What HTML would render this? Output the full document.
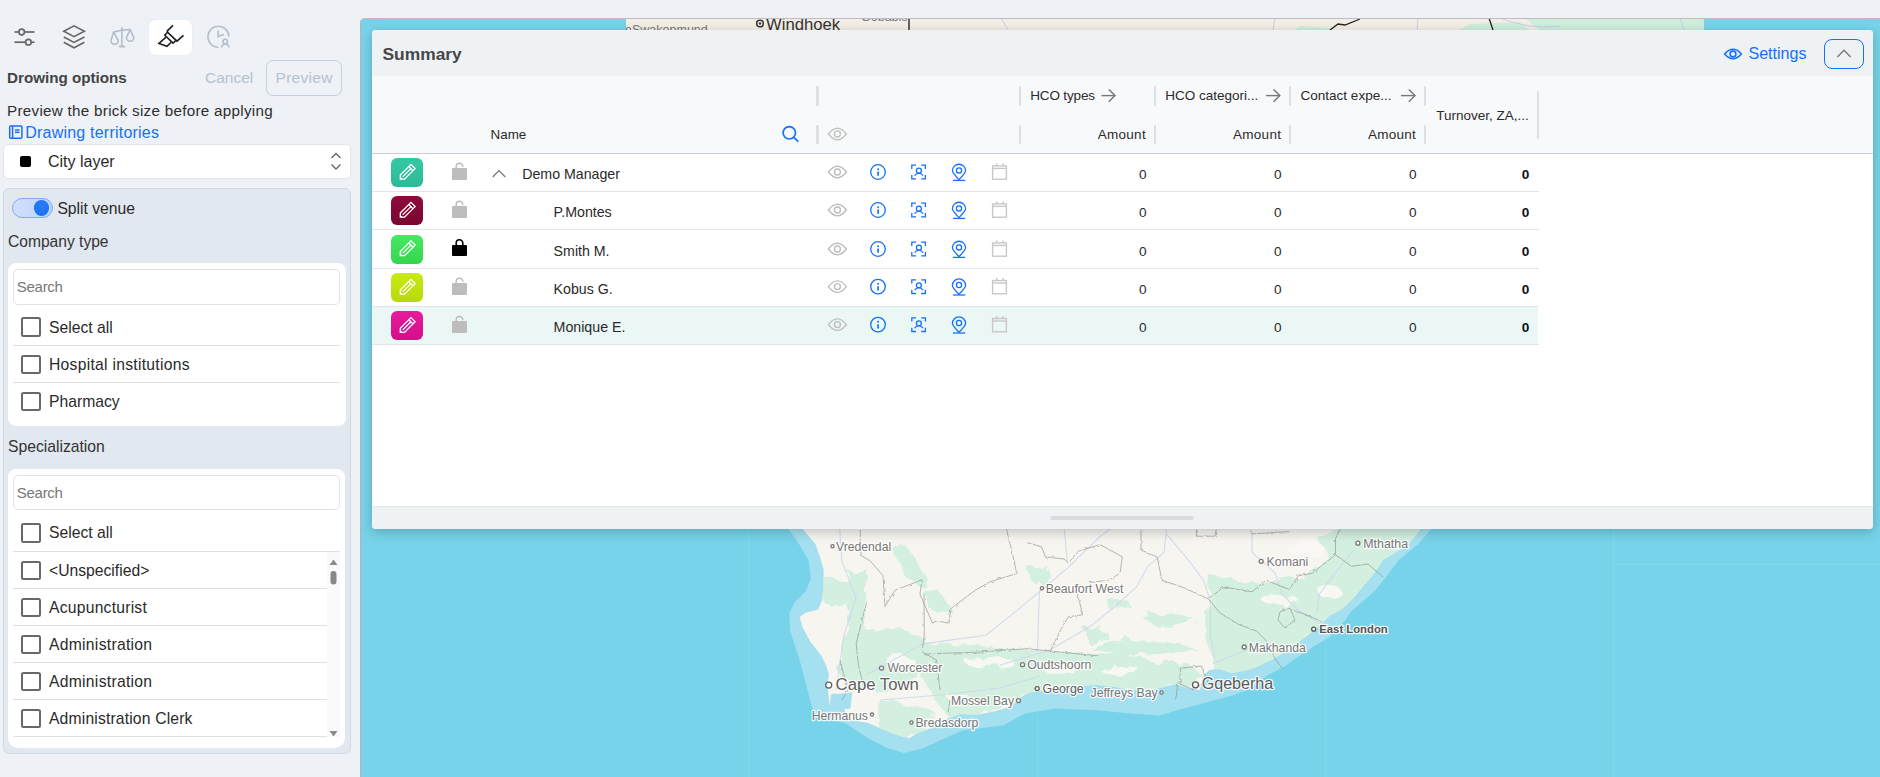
<!DOCTYPE html>
<html><head><meta charset="utf-8">
<style>
*{box-sizing:border-box;margin:0;padding:0}
html,body{width:1880px;height:777px;overflow:hidden;background:#eef1f5;font-family:"Liberation Sans",sans-serif;color:#2a2a2a}
.a{position:absolute}
.t{position:absolute;white-space:nowrap;line-height:1}
svg{position:absolute;overflow:visible}
.cb{position:absolute;left:21.3px;width:19.6px;height:19.6px;border:2px solid #686868;border-radius:2.5px;background:#fff}
.sep{position:absolute;height:1px;background:#e0e0e0}
.lt{font-size:15.7px;left:49px;color:#2a2a2a}
.rl{position:absolute;left:372px;width:1167px;height:1px;background:#e1e4e8}
.ic{position:absolute}
</style></head><body>

<!-- ============ LEFT SIDEBAR ============ -->
<div id="side">
  <!-- top icons -->
  <div class="a" style="left:149px;top:20px;width:43px;height:35px;background:#fff;border-radius:7px;box-shadow:0 0 2px rgba(0,0,0,0.05)"></div>
  <!-- sliders -->
  <svg style="left:0;top:0" width="1" height="1">
    <g stroke="#666" stroke-width="1.7" fill="none">
      <line x1="14.5" y1="32" x2="19" y2="32"/><line x1="24.5" y1="32" x2="34.5" y2="32"/>
      <circle cx="21.7" cy="32" r="2.8" fill="#eef1f5"/>
      <line x1="14.5" y1="42.2" x2="25.5" y2="42.2"/><line x1="31.3" y1="42.2" x2="34.5" y2="42.2"/>
      <circle cx="28.4" cy="42.2" r="2.8" fill="#eef1f5"/>
    </g>
    <!-- layers -->
    <g stroke="#666" stroke-width="1.6" fill="none" stroke-linejoin="miter">
      <path d="M63.8 31.2 L74 25.8 L84.4 31.2 L74 36.6 Z"/>
      <path d="M63.8 37 L74 42.4 L84.4 37"/>
      <path d="M63.8 42.2 L74 47.8 L84.4 42.2"/>
    </g>
    <!-- scales -->
    <g stroke="#b0bccb" stroke-width="1.5" fill="none" stroke-linejoin="round">
      <line x1="121.9" y1="27.2" x2="121.9" y2="46.5"/>
      <line x1="119" y1="46.5" x2="125" y2="46.5" stroke-width="1.8"/>
      <path d="M113.6 32 Q121 29.6 130.2 29.4"/>
      <path d="M113.6 32 L110.9 40.6 A3.7 3.7 0 0 0 118.3 40.6 Z"/>
      <path d="M130.2 29.6 L126.4 37.6 A3.7 3.7 0 0 0 133.8 37.6 Z"/>
    </g>
    <!-- brush -->
    <g stroke="#1e1e1e" stroke-width="1.6" fill="none" stroke-linejoin="miter" stroke-linecap="butt">
      <path d="M173 25.3 L167.3 30.8 L167.5 32.2"/>
      <path d="M167.5 32.2 L164.8 35.3 L173 43.2 L176.1 40.3 Z"/>
      <path d="M183.5 35.3 L177 41.1 L176.1 40.3"/>
      <path d="M165.8 37.3 L158.9 43.5 L167 46.3 L171.2 42.2"/>
    </g>
    <!-- clock user -->
    <g stroke="#b3bfcd" stroke-width="1.6" fill="none">
      <path d="M228.9 36.8 A10.5 10.5 0 1 0 218.4 47.3"/>
      <path d="M218.2 30.6 V36.6 L224 34.3"/>
      <circle cx="225.2" cy="41.6" r="2.3"/>
      <path d="M221.6 47.6 A3.7 3.7 0 0 1 229 47.6"/>
    </g>
  </svg>

  <div class="t" style="left:7px;top:70px;font-size:15.2px;font-weight:bold;color:#444">Drowing options</div>
  <div class="t" style="left:205px;top:70px;font-size:15.5px;color:#b5c2d0">Cancel</div>
  <div class="a" style="left:266px;top:60px;width:76px;height:36px;border:1.3px solid #c5d0dc;border-radius:7px"></div>
  <div class="t" style="left:275.5px;top:70px;font-size:15.5px;letter-spacing:0.3px;color:#b5c2d0">Preview</div>

  <div class="t" style="left:7px;top:103px;font-size:15.2px;letter-spacing:0.29px;color:#2e2e2e">Preview the brick size before applying</div>
  <svg style="left:0;top:0" width="1" height="1">
    <g stroke="#1a6cf5" stroke-width="1.5" fill="none">
      <rect x="9.7" y="126" width="12.2" height="12.2" rx="1"/>
      <line x1="12.6" y1="126" x2="12.6" y2="138.2"/>
      <line x1="15" y1="130" x2="19.5" y2="130"/>
      <line x1="15" y1="132.3" x2="19.5" y2="132.3"/>
    </g>
  </svg>
  <div class="t" style="left:25.2px;top:124.9px;font-size:16px;letter-spacing:0.22px;color:#1570fb">Drawing territories</div>

  <!-- select -->
  <div class="a" style="left:3px;top:143.5px;width:348px;height:35.5px;background:#fff;border:1px solid #e0e5ea;border-radius:5px"></div>
  <div class="a" style="left:20px;top:156px;width:11px;height:11px;background:#000;border-radius:2px"></div>
  <div class="t" style="left:48px;top:153.7px;font-size:16px;color:#2a2a2a">City layer</div>
  <svg style="left:0;top:0" width="1" height="1">
    <g stroke="#666" stroke-width="1.4" fill="none">
      <path d="M331.5 158 L336 153.5 L340.5 158"/>
      <path d="M331.5 164.5 L336 169 L340.5 164.5"/>
    </g>
  </svg>

  <!-- group box -->
  <div class="a" style="left:2.5px;top:188px;width:348.5px;height:565.8px;background:#e2e8ef;border:1px solid #d0d8e2;border-radius:6px"></div>
  <!-- toggle -->
  <div class="a" style="left:12px;top:198px;width:41px;height:19.6px;border-radius:10px;background:linear-gradient(90deg,#d3e0fc,#bcd2fb);border:1.4px solid #7eaaf8"></div>
  <div class="a" style="left:33.6px;top:200.2px;width:15.4px;height:15.4px;border-radius:50%;background:radial-gradient(circle at 50% 40%,#2a7cf8,#166bf3)"></div>
  <div class="t" style="left:57.4px;top:200.5px;font-size:15.7px;color:#2a2a2a">Split venue</div>
  <div class="t" style="left:8px;top:233.7px;font-size:15.6px;color:#333">Company type</div>

  <!-- company card -->
  <div class="a" style="left:8px;top:263px;width:337.5px;height:163px;background:#fff;border-radius:8px"></div>
  <div class="a" style="left:13px;top:269px;width:327px;height:36px;border:1px solid #dde2e8;border-radius:5px;background:#fff"></div>
  <div class="t" style="left:16.7px;top:278.8px;font-size:15px;letter-spacing:-0.25px;color:#777">Search</div>
  <div class="cb" style="top:317px"></div>
  <div class="t lt" style="top:320px">Select all</div>
  <div class="sep" style="left:13px;top:345px;width:327px"></div>
  <div class="cb" style="top:354.5px"></div>
  <div class="t lt" style="top:357px;letter-spacing:0.27px">Hospital institutions</div>
  <div class="sep" style="left:13px;top:382px;width:327px"></div>
  <div class="cb" style="top:391.5px"></div>
  <div class="t lt" style="top:394px">Pharmacy</div>

  <div class="t" style="left:8px;top:438.7px;font-size:15.7px;color:#333">Specialization</div>

  <!-- specialization card -->
  <div class="a" style="left:8px;top:469px;width:337px;height:279px;background:#fff;border-radius:8px 8px 10px 10px"></div>
  <div class="a" style="left:13px;top:474.5px;width:327px;height:35.5px;border:1px solid #dde2e8;border-radius:5px;background:#fff"></div>
  <div class="t" style="left:16.7px;top:485.2px;font-size:15px;letter-spacing:-0.25px;color:#777">Search</div>
  <div class="cb" style="top:523px"></div>
  <div class="t lt" style="top:525.4px">Select all</div>
  <div class="sep" style="left:13px;top:551px;width:327px"></div>
  <div class="a" style="left:327px;top:552px;width:13px;height:185px;background:#fafafa"></div>
  <div class="cb" style="top:560.5px"></div>
  <div class="t lt" style="top:563.4px">&lt;Unspecified&gt;</div>
  <div class="sep" style="left:13px;top:588px;width:314px"></div>
  <div class="cb" style="top:597.5px"></div>
  <div class="t lt" style="top:600.4px;letter-spacing:0.23px">Acupuncturist</div>
  <div class="sep" style="left:13px;top:625px;width:314px"></div>
  <div class="cb" style="top:634.5px"></div>
  <div class="t lt" style="top:637.2px;letter-spacing:0.28px">Administration</div>
  <div class="sep" style="left:13px;top:662px;width:314px"></div>
  <div class="cb" style="top:671.5px"></div>
  <div class="t lt" style="top:674.2px;letter-spacing:0.28px">Administration</div>
  <div class="sep" style="left:13px;top:699px;width:314px"></div>
  <div class="cb" style="top:708.5px"></div>
  <div class="t lt" style="top:711px;letter-spacing:0.16px">Administration Clerk</div>
  <div class="sep" style="left:13px;top:736px;width:314px"></div>
  <svg style="left:0;top:0" width="1" height="1">
    <path d="M329.5 565 L333.5 559.5 L337.5 565 Z" fill="#888"/>
    <rect x="330.5" y="571" width="6" height="13.5" rx="3" fill="#888"/>
    <path d="M329.5 731 L333.5 736.5 L337.5 731 Z" fill="#888"/>
  </svg>
</div>

<!-- ============ MAP ============ -->
<div id="map" class="a" style="left:360px;top:18px;width:1520px;height:759px;background:#77d3e9;border-radius:5px 0 0 0;overflow:hidden">
<!-- MAP -->
<svg style="left:-360px;top:-18px" width="1880" height="777" viewBox="0 0 1880 777">
<defs><clipPath id="lc"><polygon points="800.0,515.0 1428.0,515.0 1420.5,529.3 1408.1,545.1 1383.3,560.0 1373.2,574.7 1363.2,586.3 1353.2,598.6 1341.6,609.4 1330.0,615.6 1313.0,631.7 1296.8,643.4 1286.0,651.5 1272.5,659.6 1259.0,666.0 1250.0,669.5 1232.0,673.2 1219.5,669.3 1209.8,670.3 1204.0,675.1 1200.2,690.5 1188.6,688.6 1176.0,684.3 1164.5,687.0 1150.0,690.0 1130.4,690.1 1113.7,686.8 1097.0,685.0 1080.2,685.9 1042.6,690.9 1030.0,692.6 1024.1,695.4 1008.7,707.8 993.3,711.9 977.8,715.0 960.3,714.0 946.9,719.1 931.5,728.4 919.1,732.5 908.8,738.7 895.4,734.6 880.0,728.4 868.5,723.5 848.0,719.4 843.8,709.1 850.2,708.1 851.8,692.7 839.7,694.2 831.7,694.0 829.4,708.1 828.6,698.8 827.8,692.7 827.1,683.4 828.6,674.1 825.5,664.9 820.9,655.6 810.0,641.7 802.4,627.8 799.3,617.0 805.4,612.4 817.8,609.3 821.0,602.2 823.3,589.9 823.3,569.8 819.4,555.9 814.8,543.5 802.4,529.3"/></clipPath><filter id="bl" x="-20%" y="-20%" width="140%" height="140%"><feGaussianBlur stdDeviation="1.6"/></filter><filter id="wig" x="-5%" y="-5%" width="110%" height="110%"><feTurbulence type="fractalNoise" baseFrequency="0.25" numOctaves="2" seed="3" result="n"/><feDisplacementMap in="SourceGraphic" in2="n" scale="3"/></filter><filter id="wig2" x="-5%" y="-5%" width="110%" height="110%"><feTurbulence type="fractalNoise" baseFrequency="0.06" numOctaves="3" seed="7" result="n"/><feDisplacementMap in="SourceGraphic" in2="n" scale="14"/></filter></defs>
<line x1="749.0" y1="0" x2="749.0" y2="777" stroke="#8edcee" stroke-width="1" opacity="0.55"/>
<line x1="1037.5" y1="0" x2="1037.5" y2="777" stroke="#8edcee" stroke-width="1" opacity="0.55"/>
<line x1="1325.5" y1="0" x2="1325.5" y2="777" stroke="#8edcee" stroke-width="1" opacity="0.55"/>
<line x1="1613.5" y1="0" x2="1613.5" y2="777" stroke="#8edcee" stroke-width="1" opacity="0.55"/>
<line x1="1613" y1="564.5" x2="1880" y2="564.5" stroke="#8edcee" stroke-width="1" opacity="0.55"/>
<polygon points="784.0,515.0 788.5,529.3 797.8,542.0 808.6,560.5 810.9,579.0 805.5,591.4 794.7,602.2 789.3,613.0 790.0,630.9 799.3,658.7 805.4,681.9 813.2,711.2 817.0,715.3 845.9,723.5 868.8,738.8 887.4,748.1 903.7,753.1 921.2,749.0 941.8,739.7 962.4,730.5 1003.6,725.3 1024.1,714.0 1030.0,712.7 1055.1,708.5 1097.0,710.2 1130.4,713.5 1159.7,715.6 1179.0,709.8 1208.0,702.1 1232.0,695.4 1250.0,689.0 1268.0,675.0 1284.2,666.8 1296.8,657.8 1313.0,647.0 1329.3,637.1 1345.4,620.0 1350.1,612.5 1363.2,600.9 1374.8,590.9 1385.6,577.8 1398.7,560.0 1417.4,545.1 1431.3,529.3 1437.0,515.0" fill="#a4e0ef"/>
<polygon points="800.0,515.0 1428.0,515.0 1420.5,529.3 1408.1,545.1 1383.3,560.0 1373.2,574.7 1363.2,586.3 1353.2,598.6 1341.6,609.4 1330.0,615.6 1313.0,631.7 1296.8,643.4 1286.0,651.5 1272.5,659.6 1259.0,666.0 1250.0,669.5 1232.0,673.2 1219.5,669.3 1209.8,670.3 1204.0,675.1 1200.2,690.5 1188.6,688.6 1176.0,684.3 1164.5,687.0 1150.0,690.0 1130.4,690.1 1113.7,686.8 1097.0,685.0 1080.2,685.9 1042.6,690.9 1030.0,692.6 1024.1,695.4 1008.7,707.8 993.3,711.9 977.8,715.0 960.3,714.0 946.9,719.1 931.5,728.4 919.1,732.5 908.8,738.7 895.4,734.6 880.0,728.4 868.5,723.5 848.0,719.4 843.8,709.1 850.2,708.1 851.8,692.7 839.7,694.2 831.7,694.0 829.4,708.1 828.6,698.8 827.8,692.7 827.1,683.4 828.6,674.1 825.5,664.9 820.9,655.6 810.0,641.7 802.4,627.8 799.3,617.0 805.4,612.4 817.8,609.3 821.0,602.2 823.3,589.9 823.3,569.8 819.4,555.9 814.8,543.5 802.4,529.3" fill="#f7f5f0" stroke="#9cd6e4" stroke-width="0.5"/>
<g clip-path="url(#lc)"><g fill="#d3efe0" filter="url(#wig2)">
<polygon points="1210.0,576.0 1260.0,583.0 1300.0,578.0 1330.0,560.0 1320.0,540.0 1345.0,515.0 1440.0,515.0 1400.0,560.0 1340.0,615.0 1290.0,655.0 1245.0,676.0 1215.0,672.0 1205.0,640.0"/>
<polygon points="1090.0,648.0 1130.0,640.0 1170.0,642.0 1200.0,650.0 1160.0,655.0 1120.0,656.0"/>
<polygon points="1095.0,670.0 1140.0,660.0 1185.0,664.0 1205.0,675.0 1180.0,686.0 1130.0,690.0 1095.0,688.0"/>
<polygon points="1140.0,615.0 1175.0,612.0 1195.0,620.0 1160.0,628.0"/>
<polygon points="1085.0,633.0 1105.0,630.0 1110.0,640.0 1088.0,642.0"/>
<polygon points="1105.0,600.0 1125.0,598.0 1130.0,606.0 1108.0,608.0"/>
<polygon points="1030.0,575.0 1050.0,570.0 1055.0,580.0 1035.0,584.0"/>
<polygon points="925.0,645.0 1000.0,648.0 1060.0,652.0 1120.0,655.0 1150.0,660.0 1120.0,690.0 1060.0,692.0 1030.0,694.0 1005.0,710.0 975.0,716.0 950.0,718.0 935.0,700.0 925.0,680.0"/>
<polygon points="846.0,630.0 900.0,628.0 925.0,640.0 935.0,660.0 920.0,680.0 880.0,690.0 850.0,690.0 838.0,670.0"/>
<polygon points="880.0,700.0 905.0,705.0 935.0,712.0 925.0,733.0 900.0,738.0 878.0,728.0"/>
<polygon points="846.0,569.0 866.0,569.0 866.0,610.0 862.0,640.0 850.0,640.0 846.0,600.0"/>
<polygon points="821.0,578.0 846.0,580.0 846.0,602.0 825.0,604.0"/>
<polygon points="891.0,547.0 905.0,545.0 925.0,575.0 922.0,586.0 908.0,580.0"/>
<polygon points="924.0,590.0 940.0,592.0 951.0,610.0 940.0,615.0 926.0,605.0"/>
<polygon points="1027.0,567.0 1045.0,565.0 1048.0,582.0 1032.0,582.0"/>
<polygon points="1085.0,629.0 1100.0,625.0 1100.0,643.0 1088.0,643.0"/>
</g>
<g fill="#f9f8f4" filter="url(#wig2)" opacity="0.95">
<ellipse cx="1280" cy="600" rx="18" ry="6"/>
<ellipse cx="1330" cy="592" rx="12" ry="6"/>
<ellipse cx="1305" cy="548" rx="18" ry="8"/>
<ellipse cx="990" cy="662" rx="25" ry="5"/>
<ellipse cx="1060" cy="668" rx="18" ry="4"/>
<ellipse cx="900" cy="660" rx="14" ry="5"/>
<ellipse cx="960" cy="698" rx="12" ry="4"/>
<ellipse cx="1120" cy="670" rx="20" ry="4"/>
</g></g>
<g stroke="#cdd6ea" stroke-width="1.1" fill="none" opacity="0.85">
<polyline points="839.7,529.0 841.8,561.0 856.2,598.0 843.8,635.3 839.7,664.2 836.0,690.0"/>
<polyline points="866.5,674.5 924.0,643.6 986.0,635.3 1016.8,610.6 1041.5,590.0 1068.3,567.4 1100.0,536.5 1110.0,529.0"/>
<polyline points="1039.5,590.0 1037.4,651.8"/>
<polyline points="1064.2,529.0 1067.3,561.0"/>
<polyline points="1166.4,529.3 1164.1,552.4 1147.9,566.3 1136.3,587.2 1113.2,608.0 1090.0,626.5 1050.0,650.0 1000.0,665.0"/>
<polyline points="1166.4,533.9 1189.6,561.7 1203.5,580.2 1210.4,601.0 1210.4,635.8 1215.0,659.0"/>
<polyline points="1252.0,534.0 1252.0,552.4 1275.3,573.3 1282.2,594.1 1298.4,610.3 1321.6,624.2"/>
<polyline points="1212.7,663.6 1247.5,649.7"/>
<polyline points="1354.0,550.0 1333.2,575.6 1319.3,594.1 1317.0,612.6"/>
<polyline points="880.0,700.0 940.0,695.0 1000.0,688.0 1040.0,676.0"/>
</g>
<g stroke="#8f8f8b" stroke-width="0.8" fill="none" opacity="0.8" filter="url(#wig)">
<polyline points="1006.5,529.3 1012.7,555.0 1016.8,573.5 990.0,581.8 975.6,590.0 951.0,608.5 948.9,623.0 936.5,621.0 932.4,623.0 920.0,594.0 922.0,579.7 911.8,583.8 895.3,590.0 885.0,606.5 883.0,575.6 870.6,561.2 860.3,555.0 860.3,530.0"/>
<polyline points="866.5,602.4 856.2,643.6 858.3,664.2 862.0,680.0"/>
<polyline points="924.0,594.0 924.2,635.3 922.0,651.8 936.5,660.0 940.0,690.0"/>
<polyline points="924.0,654.0 980.0,652.0 1027.0,648.7 1060.0,652.0 1099.0,656.0"/>
<polyline points="1027.0,542.6 1041.5,546.8 1045.6,557.0 1064.2,559.0 1068.3,563.2 1078.6,551.0 1100.0,544.7 1106.0,547.8 1122.4,557.0 1120.0,573.3 1108.5,580.2 1090.0,582.5"/>
<polyline points="1076.5,590.0 1082.7,614.7 1068.3,616.8 1062.1,627.0 1049.8,651.8"/>
<polyline points="1141.0,529.3 1141.0,550.0 1157.2,557.0 1161.8,580.2 1182.6,587.2 1208.0,598.7 1224.3,587.2 1252.1,591.8 1266.0,580.2 1289.2,589.5 1298.4,575.6 1312.3,573.3 1335.5,554.7 1335.5,538.5 1340.0,529.3"/>
<polyline points="1208.0,598.7 1219.7,612.6 1238.2,624.2 1256.7,631.2 1266.0,640.4 1275.3,659.0 1282.2,668.2"/>
<polyline points="1335.5,554.7 1351.7,566.3 1367.9,564.0 1384.1,577.9"/>
<polyline points="1293.8,610.3 1312.3,617.3 1321.6,621.9"/>
<polyline points="1180.3,668.2 1201.2,666.0 1208.0,682.0 1192.0,689.0 1180.0,684.0 1180.3,668.2"/>
<polyline points="1196.5,529.3 1196.5,536.2 1215.0,536.2 1216.2,529.3"/>
<polyline points="1249.8,529.3 1252.1,533.9 1289.2,531.6"/>
<polyline points="1178.0,682.0 1175.7,700.0"/>
<polyline points="1280.0,612.0 1290.0,608.0 1295.0,620.0 1285.0,628.0 1278.0,620.0 1280.0,612.0"/>
<polyline points="950.0,700.0 948.0,712.0"/>
<polyline points="840.0,660.0 848.0,690.0 842.0,700.0"/>
</g>
<circle cx="828.7" cy="685.1" r="3.0" fill="#fff" stroke="#606060" stroke-width="1.3"/>
<text x="835.6" y="690.3" font-size="16.7" font-family="Liberation Sans" fill="#606060" font-weight="normal" letter-spacing="0" paint-order="stroke" stroke="#fff" stroke-width="2.6" stroke-opacity="0.85" stroke-linejoin="round">Cape Town</text>
<circle cx="881.5" cy="668.1" r="2.0" fill="#fff" stroke="#777" stroke-width="1.3"/>
<text x="887.4" y="672.4" font-size="12.1" font-family="Liberation Sans" fill="#777" font-weight="normal" letter-spacing="0" paint-order="stroke" stroke="#fff" stroke-width="2.6" stroke-opacity="0.85" stroke-linejoin="round">Worcester</text>
<circle cx="872.0" cy="714.6" r="1.6" fill="#fff" stroke="#777" stroke-width="1.3"/>
<text x="811.7" y="719.5" font-size="12.2" font-family="Liberation Sans" fill="#777" font-weight="normal" letter-spacing="0" paint-order="stroke" stroke="#fff" stroke-width="2.6" stroke-opacity="0.85" stroke-linejoin="round">Hermanus</text>
<circle cx="911.4" cy="722.5" r="1.6" fill="#fff" stroke="#777" stroke-width="1.3"/>
<text x="915.5" y="727.4" font-size="12.15" font-family="Liberation Sans" fill="#777" font-weight="normal" letter-spacing="0" paint-order="stroke" stroke="#fff" stroke-width="2.6" stroke-opacity="0.85" stroke-linejoin="round">Bredasdorp</text>
<circle cx="1018.5" cy="700.6" r="2.0" fill="#fff" stroke="#777" stroke-width="1.3"/>
<text x="951.0" y="705.2" font-size="12.2" font-family="Liberation Sans" fill="#777" font-weight="normal" letter-spacing="0" paint-order="stroke" stroke="#fff" stroke-width="2.6" stroke-opacity="0.85" stroke-linejoin="round">Mossel Bay</text>
<circle cx="832.5" cy="546.3" r="1.6" fill="#fff" stroke="#777" stroke-width="1.3"/>
<text x="836.0" y="550.5" font-size="12.2" font-family="Liberation Sans" fill="#777" font-weight="normal" letter-spacing="0" paint-order="stroke" stroke="#fff" stroke-width="2.6" stroke-opacity="0.85" stroke-linejoin="round">Vredendal</text>
<circle cx="1041.9" cy="588.3" r="1.6" fill="#fff" stroke="#777" stroke-width="1.3"/>
<text x="1045.7" y="593.0" font-size="12.3" font-family="Liberation Sans" fill="#777" font-weight="normal" letter-spacing="0" paint-order="stroke" stroke="#fff" stroke-width="2.6" stroke-opacity="0.85" stroke-linejoin="round">Beaufort West</text>
<circle cx="1022.5" cy="664.7" r="2.0" fill="#fff" stroke="#777" stroke-width="1.3"/>
<text x="1027.2" y="669.3" font-size="12.3" font-family="Liberation Sans" fill="#777" font-weight="normal" letter-spacing="0" paint-order="stroke" stroke="#fff" stroke-width="2.6" stroke-opacity="0.85" stroke-linejoin="round">Oudtshoorn</text>
<circle cx="1037.2" cy="688.6" r="2.0" fill="#fff" stroke="#5e5e5e" stroke-width="1.3"/>
<text x="1042.6" y="692.5" font-size="12.3" font-family="Liberation Sans" fill="#5e5e5e" font-weight="normal" letter-spacing="0" paint-order="stroke" stroke="#fff" stroke-width="2.6" stroke-opacity="0.85" stroke-linejoin="round">George</text>
<circle cx="1161.5" cy="692.5" r="1.6" fill="#fff" stroke="#777" stroke-width="1.3"/>
<text x="1090.5" y="697.1" font-size="12.25" font-family="Liberation Sans" fill="#777" font-weight="normal" letter-spacing="0" paint-order="stroke" stroke="#fff" stroke-width="2.6" stroke-opacity="0.85" stroke-linejoin="round">Jeffreys Bay</text>
<circle cx="1261.2" cy="561.3" r="2.0" fill="#fff" stroke="#777" stroke-width="1.3"/>
<text x="1266.6" y="565.5" font-size="12.3" font-family="Liberation Sans" fill="#777" font-weight="normal" letter-spacing="0" paint-order="stroke" stroke="#fff" stroke-width="2.6" stroke-opacity="0.85" stroke-linejoin="round">Komani</text>
<circle cx="1313.7" cy="629.2" r="2.0" fill="#fff" stroke="#555" stroke-width="1.3"/>
<text x="1319.3" y="633.4" font-size="11.3" font-family="Liberation Sans" fill="#555" font-weight="bold" letter-spacing="0" paint-order="stroke" stroke="#fff" stroke-width="2.6" stroke-opacity="0.85" stroke-linejoin="round">East London</text>
<circle cx="1244.2" cy="647.0" r="2.0" fill="#fff" stroke="#777" stroke-width="1.3"/>
<text x="1248.8" y="651.6" font-size="12.2" font-family="Liberation Sans" fill="#777" font-weight="normal" letter-spacing="0" paint-order="stroke" stroke="#fff" stroke-width="2.6" stroke-opacity="0.85" stroke-linejoin="round">Makhanda</text>
<circle cx="1195.5" cy="684.8" r="3.0" fill="#fff" stroke="#5a5a5a" stroke-width="1.3"/>
<text x="1201.7" y="689.4" font-size="16.1" font-family="Liberation Sans" fill="#5a5a5a" font-weight="normal" letter-spacing="0" paint-order="stroke" stroke="#fff" stroke-width="2.6" stroke-opacity="0.85" stroke-linejoin="round">Gqeberha</text>
<circle cx="1357.9" cy="543.2" r="2.0" fill="#fff" stroke="#777" stroke-width="1.3"/>
<text x="1363.3" y="547.9" font-size="12.4" font-family="Liberation Sans" fill="#777" font-weight="normal" letter-spacing="0" paint-order="stroke" stroke="#fff" stroke-width="2.6" stroke-opacity="0.85" stroke-linejoin="round">Mthatha</text>
<rect x="626" y="0" width="1077.6" height="40" fill="#f3efe7"/>
<g fill="#cfeedd">
<polygon points="1440.0,40.0 1470.0,24.0 1520.0,22.0 1540.0,40.0"/>
<polygon points="1525.0,18.0 1703.6,18.0 1703.6,40.0 1550.0,40.0"/>
<polygon points="1280.0,40.0 1300.0,26.0 1330.0,28.0 1340.0,40.0"/>
<polygon points="1350.0,40.0 1360.0,36.0 1375.0,40.0"/>
</g>
<g stroke="#c6cfe6" stroke-width="1" fill="none"><path d="M1001 18 L1008 30"/><path d="M1275 18 L1273 30"/><path d="M1418 18 L1417 30"/><path d="M1500 18 Q1530 30 1560 26"/><path d="M1680 18 L1684 30"/></g>
<g stroke="#222" stroke-width="1.3" fill="none"><path d="M1330 30 L1338 24 L1345 25 L1360 19"/><path d="M1489 18 L1493 30"/></g>
<path d="M909 18 V30" stroke="#333" stroke-width="1.5"/>
<circle cx="760" cy="23.5" r="3.3" fill="#fff" stroke="#333" stroke-width="1.6"/><circle cx="760" cy="23.5" r="1.3" fill="#333"/>
<text x="766" y="29.5" font-size="16.7" font-family="Liberation Sans" fill="#333">Windhoek</text>
<circle cx="628.5" cy="29.5" r="2" fill="#fff" stroke="#777" stroke-width="1.2"/>
<text x="632" y="34.2" font-size="12.5" font-family="Liberation Sans" fill="#777">Swakopmund</text>
<text x="861" y="21" font-size="12.5" font-family="Liberation Sans" fill="#777">Gobabis</text>
</svg>
<!-- END MAP -->
</div>

<div id="mapborder" class="a" style="left:360px;top:18px;width:1520px;height:759px;border-left:1px solid #bcb1b0;border-top:1px solid #c4bab9;border-radius:5px 0 0 0;pointer-events:none"></div>
<!-- ============ SUMMARY PANEL ============ -->
<div id="panel" class="a" style="left:372px;top:30px;width:1501px;height:499px;background:#fff;border-radius:4px;overflow:hidden;box-shadow:0 3px 12px rgba(0,0,0,0.22)">
  <div class="a" style="left:0;top:0;width:1501px;height:46px;background:#eff2f5"></div>
  <div class="a" style="left:0;top:46px;width:1501px;height:78px;background:#f8f9fb;border-bottom:1px solid #c9ced5"></div>
  <div class="a" style="left:0;top:476px;width:1501px;height:23px;background:#eff2f5;border-top:1px solid #e3e6ea"></div>
  <div class="a" style="left:678px;top:486px;width:144px;height:4px;background:#d8dcdf;border-radius:2px"></div>
</div>

<!-- PANEL CONTENT -->
<div class="t" style="left:382.5px;top:46.2px;font-size:17.4px;font-weight:bold;color:#474747">Summary</div>
<svg style="left:0;top:0" width="1" height="1"><g stroke="#1570fb" stroke-width="1.6" fill="none"><path d="M1724.6 54 Q1733 44.6 1741.4 54 Q1733 63.4 1724.6 54 Z"/><circle cx="1733" cy="54" r="2.9"/></g></svg>
<div class="t" style="left:1748.4px;top:45.3px;font-size:16.1px;color:#1570fb">Settings</div>
<div class="a" style="left:1824px;top:39px;width:40px;height:29.5px;border:1.5px solid #1570fb;border-radius:8px"></div>
<svg style="left:0;top:0" width="1" height="1"><path d="M1837.3 57 L1844 50.3 L1850.7 57" stroke="#777" stroke-width="1.4" fill="none"/></svg>
<div class="t" style="left:490.6px;top:127.56px;font-size:13.4px;color:#2a2a2a;letter-spacing:0px">Name</div>
<svg style="left:0;top:0" width="1" height="1"><g stroke="#1570fb" stroke-width="1.7" fill="none"><circle cx="789.3" cy="132.8" r="6.2"/><line x1="793.8" y1="137.3" x2="798.3" y2="141.6"/></g></svg>
<div class="a" style="left:816.1px;top:85.6px;width:2.5px;height:20.2px;background:#dcdfe3;border-radius:1px"></div>
<div class="a" style="left:816.1px;top:124.5px;width:2.5px;height:19.2px;background:#dcdfe3;border-radius:1px"></div>
<div class="a" style="left:1019.0px;top:85.6px;width:2.0px;height:20.2px;background:#dcdfe3;border-radius:1px"></div>
<div class="a" style="left:1019.0px;top:124.5px;width:2.0px;height:19.2px;background:#dcdfe3;border-radius:1px"></div>
<div class="a" style="left:1153.7px;top:85.6px;width:2.0px;height:20.2px;background:#dcdfe3;border-radius:1px"></div>
<div class="a" style="left:1153.7px;top:124.5px;width:2.0px;height:19.2px;background:#dcdfe3;border-radius:1px"></div>
<div class="a" style="left:1289.0px;top:85.6px;width:2.0px;height:20.2px;background:#dcdfe3;border-radius:1px"></div>
<div class="a" style="left:1289.0px;top:124.5px;width:2.0px;height:19.2px;background:#dcdfe3;border-radius:1px"></div>
<div class="a" style="left:1424.1px;top:85.6px;width:2.0px;height:20.2px;background:#dcdfe3;border-radius:1px"></div>
<div class="a" style="left:1424.1px;top:124.5px;width:2.0px;height:19.2px;background:#dcdfe3;border-radius:1px"></div>
<div class="a" style="left:1536.5px;top:90.5px;width:2.5px;height:48.3px;background:#dcdfe3;border-radius:1px"></div>
<svg style="left:0;top:0" width="1" height="1"><g stroke="#c4c4c4" stroke-width="1.4" fill="none"><path d="M828.4 134.0 Q837.4 122.5 846.4 134.0 Q837.4 145.5 828.4 134.0 Z"/><circle cx="837.4" cy="134.0" r="3"/></g></svg>
<div class="t" style="left:1030.2px;top:88.57px;font-size:13.5px;color:#2a2a2a;letter-spacing:-0.15px">HCO types</div>
<div class="t" style="left:1165.3px;top:88.57px;font-size:13.5px;color:#2a2a2a;letter-spacing:0px">HCO categori...</div>
<div class="t" style="left:1300.6px;top:88.57px;font-size:13.5px;color:#2a2a2a;letter-spacing:0px">Contact expe...</div>
<svg style="left:0;top:0" width="1" height="1"><g stroke="#777" stroke-width="1.4" fill="none"><line x1="1101.5" y1="95.6" x2="1115.0" y2="95.6"/><path d="M1108.8 89.4 L1115.0 95.6 L1108.8 101.8"/></g></svg>
<svg style="left:0;top:0" width="1" height="1"><g stroke="#777" stroke-width="1.4" fill="none"><line x1="1266.0" y1="95.6" x2="1279.8" y2="95.6"/><path d="M1273.6 89.4 L1279.8 95.6 L1273.6 101.8"/></g></svg>
<svg style="left:0;top:0" width="1" height="1"><g stroke="#777" stroke-width="1.4" fill="none"><line x1="1401.0" y1="95.6" x2="1415.0" y2="95.6"/><path d="M1408.8 89.4 L1415.0 95.6 L1408.8 101.8"/></g></svg>
<div class="t" style="right:734.08px;top:127.57px;font-size:13.5px;color:#2a2a2a;letter-spacing:0.28px">Amount</div>
<div class="t" style="right:598.78px;top:127.57px;font-size:13.5px;color:#2a2a2a;letter-spacing:0.28px">Amount</div>
<div class="t" style="right:463.88px;top:127.57px;font-size:13.5px;color:#2a2a2a;letter-spacing:0.28px">Amount</div>
<div class="t" style="left:1436.2px;top:108.57px;font-size:13.5px;color:#2a2a2a;letter-spacing:0px">Turnover, ZA,...</div>
<div class="a" style="left:372px;top:306.5px;width:1166px;height:37.5px;background:#eaf7f5"></div>
<div class="rl" style="top:191.0px"></div>
<div class="a" style="left:391px;top:158.0px;width:32px;height:29px;border-radius:6px;background:linear-gradient(180deg,#35c8a5,#2fb996)"></div>
<svg style="left:0;top:0" width="1" height="1"><g stroke="#fff" stroke-width="1.3" fill="none" stroke-linejoin="miter" transform="translate(0 0.0)"><path d="M400.3 179.2 L400.3 175 L410.9 164.4 L415.1 168.6 L404.5 179.2 Z"/><line x1="408.8" y1="166.5" x2="413" y2="170.7"/><line x1="402.6" y1="176.9" x2="410.9" y2="168.6"/><path d="M400.3 177.3 L402.2 179.2" stroke-width="1"/></g></svg>
<div class="a" style="left:452.2px;top:168.2px;width:14.6px;height:11.7px;background:#bdbdbd;border-radius:1px"></div>
<svg style="left:0;top:0" width="1" height="1"><path d="M456.2 168.7 V166.6 A3.3 3.3 0 0 1 462.8 166.6 V167.0" stroke="#bdbdbd" stroke-width="1.5" fill="none"/></svg>
<svg style="left:0;top:0" width="1" height="1"><path d="M492.7 177 L499 170.6 L505.3 177" stroke="#777" stroke-width="1.3" fill="none"/></svg>
<div class="t" style="left:522.2px;top:166.98px;font-size:14.2px;color:#2a2a2a">Demo Manager</div>
<svg style="left:0;top:0" width="1" height="1"><g stroke="#bdbdbd" stroke-width="1.4" fill="none"><path d="M828.4 172.0 Q837.4 160.5 846.4 172.0 Q837.4 183.5 828.4 172.0 Z"/><circle cx="837.4" cy="172.0" r="3"/></g></svg>
<svg style="left:0;top:0" width="1" height="1"><g stroke="#1570fb" stroke-width="1.3" fill="none"><circle cx="878" cy="172.0" r="7.3"/><line x1="878.1" y1="171.6" x2="878.1" y2="175.8" stroke-width="1.7"/></g><circle cx="878.1" cy="169.2" r="1" fill="#1570fb"/></svg>
<svg style="left:0;top:0" width="1" height="1"><g stroke="#1570fb" stroke-width="1.3" fill="none"><path d="M911.8 169.0 V165.2 H916.0"/><path d="M921.2 165.2 H925.4 V169.0"/><path d="M911.8 175.1 V178.9 H916.0"/><path d="M921.2 178.9 H925.4 V175.1"/><circle cx="918.9" cy="170.7" r="2.5"/><path d="M914.6 175.6 Q918.9 170.5 923.1 175.6"/></g></svg>
<svg style="left:0;top:0" width="1" height="1"><g stroke="#1570fb" stroke-width="1.3" fill="none"><path d="M959 179.6 C954 174.5 952.4 172.5 952.4 170.8 A6.6 6.6 0 0 1 965.6 170.8 C965.6 172.5 964 174.5 959 179.6 Z"/><circle cx="959" cy="170.4" r="2.6"/><line x1="952.9" y1="180.4" x2="965.2" y2="180.4"/></g></svg>
<svg style="left:0;top:0" width="1" height="1"><g stroke="#c8c8c8" stroke-width="1.4" fill="none"><rect x="992.6" y="165.9" width="13.8" height="13.3"/><line x1="992.6" y1="168.4" x2="1006.4" y2="168.4"/><line x1="996.7" y1="163.4" x2="996.7" y2="165.9"/><line x1="1003.1" y1="163.4" x2="1003.1" y2="165.9"/></g></svg>
<div class="t" style="right:733.5px;top:168.09px;font-size:13.6px;color:#2a2a2a">0</div>
<div class="t" style="right:598.5px;top:168.09px;font-size:13.6px;color:#2a2a2a">0</div>
<div class="t" style="right:463.4px;top:168.09px;font-size:13.6px;color:#2a2a2a">0</div>
<div class="t" style="right:350.6px;top:168.09px;font-size:13.6px;font-weight:bold;color:#111">0</div>
<div class="rl" style="top:229.0px"></div>
<div class="a" style="left:391px;top:196.0px;width:32px;height:29px;border-radius:6px;background:linear-gradient(180deg,#8e0b3b,#7a0631)"></div>
<svg style="left:0;top:0" width="1" height="1"><g stroke="#fff" stroke-width="1.3" fill="none" stroke-linejoin="miter" transform="translate(0 38.0)"><path d="M400.3 179.2 L400.3 175 L410.9 164.4 L415.1 168.6 L404.5 179.2 Z"/><line x1="408.8" y1="166.5" x2="413" y2="170.7"/><line x1="402.6" y1="176.9" x2="410.9" y2="168.6"/><path d="M400.3 177.3 L402.2 179.2" stroke-width="1"/></g></svg>
<div class="a" style="left:452.2px;top:206.2px;width:14.6px;height:11.7px;background:#bdbdbd;border-radius:1px"></div>
<svg style="left:0;top:0" width="1" height="1"><path d="M456.2 206.7 V204.6 A3.3 3.3 0 0 1 462.8 204.6 V205.0" stroke="#bdbdbd" stroke-width="1.5" fill="none"/></svg>
<div class="t" style="left:553.6px;top:204.98px;font-size:14.2px;color:#2a2a2a">P.Montes</div>
<svg style="left:0;top:0" width="1" height="1"><g stroke="#bdbdbd" stroke-width="1.4" fill="none"><path d="M828.4 210.0 Q837.4 198.5 846.4 210.0 Q837.4 221.5 828.4 210.0 Z"/><circle cx="837.4" cy="210.0" r="3"/></g></svg>
<svg style="left:0;top:0" width="1" height="1"><g stroke="#1570fb" stroke-width="1.3" fill="none"><circle cx="878" cy="210.0" r="7.3"/><line x1="878.1" y1="209.6" x2="878.1" y2="213.8" stroke-width="1.7"/></g><circle cx="878.1" cy="207.2" r="1" fill="#1570fb"/></svg>
<svg style="left:0;top:0" width="1" height="1"><g stroke="#1570fb" stroke-width="1.3" fill="none"><path d="M911.8 207.0 V203.2 H916.0"/><path d="M921.2 203.2 H925.4 V207.0"/><path d="M911.8 213.1 V216.9 H916.0"/><path d="M921.2 216.9 H925.4 V213.1"/><circle cx="918.9" cy="208.7" r="2.5"/><path d="M914.6 213.6 Q918.9 208.5 923.1 213.6"/></g></svg>
<svg style="left:0;top:0" width="1" height="1"><g stroke="#1570fb" stroke-width="1.3" fill="none"><path d="M959 217.6 C954 212.5 952.4 210.5 952.4 208.8 A6.6 6.6 0 0 1 965.6 208.8 C965.6 210.5 964 212.5 959 217.6 Z"/><circle cx="959" cy="208.4" r="2.6"/><line x1="952.9" y1="218.4" x2="965.2" y2="218.4"/></g></svg>
<svg style="left:0;top:0" width="1" height="1"><g stroke="#c8c8c8" stroke-width="1.4" fill="none"><rect x="992.6" y="203.9" width="13.8" height="13.3"/><line x1="992.6" y1="206.4" x2="1006.4" y2="206.4"/><line x1="996.7" y1="201.4" x2="996.7" y2="203.9"/><line x1="1003.1" y1="201.4" x2="1003.1" y2="203.9"/></g></svg>
<div class="t" style="right:733.5px;top:206.09px;font-size:13.6px;color:#2a2a2a">0</div>
<div class="t" style="right:598.5px;top:206.09px;font-size:13.6px;color:#2a2a2a">0</div>
<div class="t" style="right:463.4px;top:206.09px;font-size:13.6px;color:#2a2a2a">0</div>
<div class="t" style="right:350.6px;top:206.09px;font-size:13.6px;font-weight:bold;color:#111">0</div>
<div class="rl" style="top:267.5px"></div>
<div class="a" style="left:391px;top:234.5px;width:32px;height:29px;border-radius:6px;background:linear-gradient(180deg,#45ea60,#35d450)"></div>
<svg style="left:0;top:0" width="1" height="1"><g stroke="#fff" stroke-width="1.3" fill="none" stroke-linejoin="miter" transform="translate(0 76.5)"><path d="M400.3 179.2 L400.3 175 L410.9 164.4 L415.1 168.6 L404.5 179.2 Z"/><line x1="408.8" y1="166.5" x2="413" y2="170.7"/><line x1="402.6" y1="176.9" x2="410.9" y2="168.6"/><path d="M400.3 177.3 L402.2 179.2" stroke-width="1"/></g></svg>
<div class="a" style="left:452.2px;top:244.7px;width:14.6px;height:11.7px;background:#000;border-radius:1px"></div>
<svg style="left:0;top:0" width="1" height="1"><path d="M456.2 245.2 V243.1 A3.3 3.3 0 0 1 462.8 243.1 V245.2" stroke="#000" stroke-width="1.6" fill="none"/></svg>
<div class="t" style="left:553.6px;top:243.98px;font-size:14.2px;color:#2a2a2a">Smith M.</div>
<svg style="left:0;top:0" width="1" height="1"><g stroke="#bdbdbd" stroke-width="1.4" fill="none"><path d="M828.4 249.0 Q837.4 237.5 846.4 249.0 Q837.4 260.5 828.4 249.0 Z"/><circle cx="837.4" cy="249.0" r="3"/></g></svg>
<svg style="left:0;top:0" width="1" height="1"><g stroke="#1570fb" stroke-width="1.3" fill="none"><circle cx="878" cy="249.0" r="7.3"/><line x1="878.1" y1="248.6" x2="878.1" y2="252.8" stroke-width="1.7"/></g><circle cx="878.1" cy="246.2" r="1" fill="#1570fb"/></svg>
<svg style="left:0;top:0" width="1" height="1"><g stroke="#1570fb" stroke-width="1.3" fill="none"><path d="M911.8 246.0 V242.2 H916.0"/><path d="M921.2 242.2 H925.4 V246.0"/><path d="M911.8 252.1 V255.9 H916.0"/><path d="M921.2 255.9 H925.4 V252.1"/><circle cx="918.9" cy="247.7" r="2.5"/><path d="M914.6 252.6 Q918.9 247.5 923.1 252.6"/></g></svg>
<svg style="left:0;top:0" width="1" height="1"><g stroke="#1570fb" stroke-width="1.3" fill="none"><path d="M959 256.6 C954 251.5 952.4 249.5 952.4 247.8 A6.6 6.6 0 0 1 965.6 247.8 C965.6 249.5 964 251.5 959 256.6 Z"/><circle cx="959" cy="247.4" r="2.6"/><line x1="952.9" y1="257.4" x2="965.2" y2="257.4"/></g></svg>
<svg style="left:0;top:0" width="1" height="1"><g stroke="#c8c8c8" stroke-width="1.4" fill="none"><rect x="992.6" y="242.9" width="13.8" height="13.3"/><line x1="992.6" y1="245.4" x2="1006.4" y2="245.4"/><line x1="996.7" y1="240.4" x2="996.7" y2="242.9"/><line x1="1003.1" y1="240.4" x2="1003.1" y2="242.9"/></g></svg>
<div class="t" style="right:733.5px;top:245.09px;font-size:13.6px;color:#2a2a2a">0</div>
<div class="t" style="right:598.5px;top:245.09px;font-size:13.6px;color:#2a2a2a">0</div>
<div class="t" style="right:463.4px;top:245.09px;font-size:13.6px;color:#2a2a2a">0</div>
<div class="t" style="right:350.6px;top:245.09px;font-size:13.6px;font-weight:bold;color:#111">0</div>
<div class="rl" style="top:305.6px"></div>
<div class="a" style="left:391px;top:273.0px;width:32px;height:29px;border-radius:6px;background:linear-gradient(180deg,#c9ea16,#b8d80a)"></div>
<svg style="left:0;top:0" width="1" height="1"><g stroke="#fff" stroke-width="1.3" fill="none" stroke-linejoin="miter" transform="translate(0 115.0)"><path d="M400.3 179.2 L400.3 175 L410.9 164.4 L415.1 168.6 L404.5 179.2 Z"/><line x1="408.8" y1="166.5" x2="413" y2="170.7"/><line x1="402.6" y1="176.9" x2="410.9" y2="168.6"/><path d="M400.3 177.3 L402.2 179.2" stroke-width="1"/></g></svg>
<div class="a" style="left:452.2px;top:283.2px;width:14.6px;height:11.7px;background:#bdbdbd;border-radius:1px"></div>
<svg style="left:0;top:0" width="1" height="1"><path d="M456.2 283.7 V281.6 A3.3 3.3 0 0 1 462.8 281.6 V282.0" stroke="#bdbdbd" stroke-width="1.5" fill="none"/></svg>
<div class="t" style="left:553.6px;top:281.58px;font-size:14.2px;color:#2a2a2a">Kobus G.</div>
<svg style="left:0;top:0" width="1" height="1"><g stroke="#bdbdbd" stroke-width="1.4" fill="none"><path d="M828.4 286.6 Q837.4 275.1 846.4 286.6 Q837.4 298.1 828.4 286.6 Z"/><circle cx="837.4" cy="286.6" r="3"/></g></svg>
<svg style="left:0;top:0" width="1" height="1"><g stroke="#1570fb" stroke-width="1.3" fill="none"><circle cx="878" cy="286.6" r="7.3"/><line x1="878.1" y1="286.2" x2="878.1" y2="290.4" stroke-width="1.7"/></g><circle cx="878.1" cy="283.8" r="1" fill="#1570fb"/></svg>
<svg style="left:0;top:0" width="1" height="1"><g stroke="#1570fb" stroke-width="1.3" fill="none"><path d="M911.8 283.6 V279.8 H916.0"/><path d="M921.2 279.8 H925.4 V283.6"/><path d="M911.8 289.7 V293.5 H916.0"/><path d="M921.2 293.5 H925.4 V289.7"/><circle cx="918.9" cy="285.3" r="2.5"/><path d="M914.6 290.2 Q918.9 285.1 923.1 290.2"/></g></svg>
<svg style="left:0;top:0" width="1" height="1"><g stroke="#1570fb" stroke-width="1.3" fill="none"><path d="M959 294.2 C954 289.1 952.4 287.1 952.4 285.4 A6.6 6.6 0 0 1 965.6 285.4 C965.6 287.1 964 289.1 959 294.2 Z"/><circle cx="959" cy="285.0" r="2.6"/><line x1="952.9" y1="295.0" x2="965.2" y2="295.0"/></g></svg>
<svg style="left:0;top:0" width="1" height="1"><g stroke="#c8c8c8" stroke-width="1.4" fill="none"><rect x="992.6" y="280.5" width="13.8" height="13.3"/><line x1="992.6" y1="283.0" x2="1006.4" y2="283.0"/><line x1="996.7" y1="278.0" x2="996.7" y2="280.5"/><line x1="1003.1" y1="278.0" x2="1003.1" y2="280.5"/></g></svg>
<div class="t" style="right:733.5px;top:282.69px;font-size:13.6px;color:#2a2a2a">0</div>
<div class="t" style="right:598.5px;top:282.69px;font-size:13.6px;color:#2a2a2a">0</div>
<div class="t" style="right:463.4px;top:282.69px;font-size:13.6px;color:#2a2a2a">0</div>
<div class="t" style="right:350.6px;top:282.69px;font-size:13.6px;font-weight:bold;color:#111">0</div>
<div class="rl" style="top:343.8px"></div>
<div class="a" style="left:391px;top:311.2px;width:32px;height:29px;border-radius:6px;background:linear-gradient(180deg,#e81a9c,#d40f8a)"></div>
<svg style="left:0;top:0" width="1" height="1"><g stroke="#fff" stroke-width="1.3" fill="none" stroke-linejoin="miter" transform="translate(0 153.2)"><path d="M400.3 179.2 L400.3 175 L410.9 164.4 L415.1 168.6 L404.5 179.2 Z"/><line x1="408.8" y1="166.5" x2="413" y2="170.7"/><line x1="402.6" y1="176.9" x2="410.9" y2="168.6"/><path d="M400.3 177.3 L402.2 179.2" stroke-width="1"/></g></svg>
<div class="a" style="left:452.2px;top:321.4px;width:14.6px;height:11.7px;background:#bdbdbd;border-radius:1px"></div>
<svg style="left:0;top:0" width="1" height="1"><path d="M456.2 321.9 V319.8 A3.3 3.3 0 0 1 462.8 319.8 V320.2" stroke="#bdbdbd" stroke-width="1.5" fill="none"/></svg>
<div class="t" style="left:553.6px;top:319.58px;font-size:14.2px;color:#2a2a2a">Monique E.</div>
<svg style="left:0;top:0" width="1" height="1"><g stroke="#bdbdbd" stroke-width="1.4" fill="none"><path d="M828.4 324.6 Q837.4 313.1 846.4 324.6 Q837.4 336.1 828.4 324.6 Z"/><circle cx="837.4" cy="324.6" r="3"/></g></svg>
<svg style="left:0;top:0" width="1" height="1"><g stroke="#1570fb" stroke-width="1.3" fill="none"><circle cx="878" cy="324.6" r="7.3"/><line x1="878.1" y1="324.2" x2="878.1" y2="328.4" stroke-width="1.7"/></g><circle cx="878.1" cy="321.8" r="1" fill="#1570fb"/></svg>
<svg style="left:0;top:0" width="1" height="1"><g stroke="#1570fb" stroke-width="1.3" fill="none"><path d="M911.8 321.6 V317.8 H916.0"/><path d="M921.2 317.8 H925.4 V321.6"/><path d="M911.8 327.7 V331.5 H916.0"/><path d="M921.2 331.5 H925.4 V327.7"/><circle cx="918.9" cy="323.3" r="2.5"/><path d="M914.6 328.2 Q918.9 323.1 923.1 328.2"/></g></svg>
<svg style="left:0;top:0" width="1" height="1"><g stroke="#1570fb" stroke-width="1.3" fill="none"><path d="M959 332.2 C954 327.1 952.4 325.1 952.4 323.4 A6.6 6.6 0 0 1 965.6 323.4 C965.6 325.1 964 327.1 959 332.2 Z"/><circle cx="959" cy="323.0" r="2.6"/><line x1="952.9" y1="333.0" x2="965.2" y2="333.0"/></g></svg>
<svg style="left:0;top:0" width="1" height="1"><g stroke="#c8c8c8" stroke-width="1.4" fill="none"><rect x="992.6" y="318.5" width="13.8" height="13.3"/><line x1="992.6" y1="321.0" x2="1006.4" y2="321.0"/><line x1="996.7" y1="316.0" x2="996.7" y2="318.5"/><line x1="1003.1" y1="316.0" x2="1003.1" y2="318.5"/></g></svg>
<div class="t" style="right:733.5px;top:320.69px;font-size:13.6px;color:#2a2a2a">0</div>
<div class="t" style="right:598.5px;top:320.69px;font-size:13.6px;color:#2a2a2a">0</div>
<div class="t" style="right:463.4px;top:320.69px;font-size:13.6px;color:#2a2a2a">0</div>
<div class="t" style="right:350.6px;top:320.69px;font-size:13.6px;font-weight:bold;color:#111">0</div>
<!-- END PANEL CONTENT -->




</body></html>
